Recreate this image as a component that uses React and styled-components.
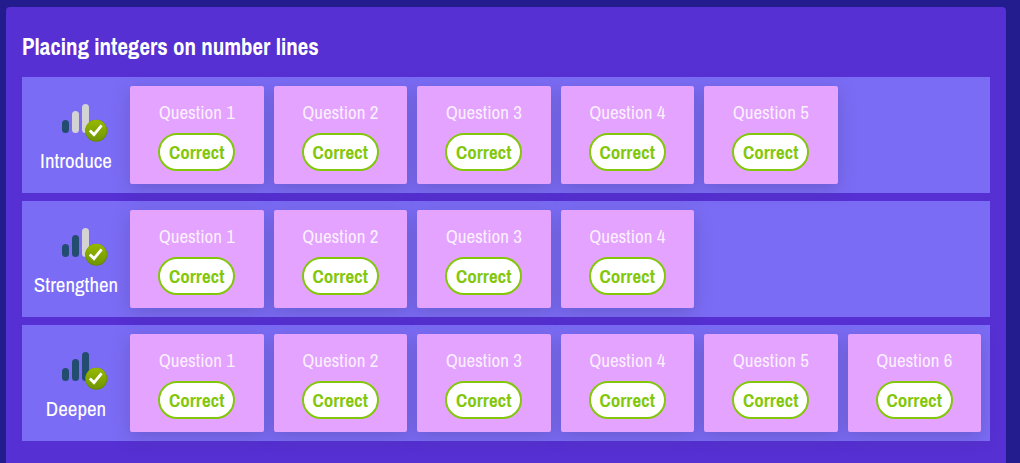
import React from "react";
import styled, { createGlobalStyle } from "styled-components";

const GlobalStyle = createGlobalStyle`
  *, *::before, *::after { box-sizing: border-box; }
  body {
    margin: 0;
    background: #231c8e;
    color: #fff;
    font-family: "Archivo Narrow", "Liberation Sans Narrow", "Arial Narrow", "Liberation Sans", sans-serif;
  }
`;

const Page = styled.main`
  display: flex;
  flex-direction: column;
  min-height: 100vh;
  padding: 7px 14px 0 6px;
`;

const Panel = styled.section`
  flex: 1;
  padding: 24px 16px 22px;
  border-radius: 4px 4px 0 0;
  background: #5630d2;
`;

const Title = styled.h2`
  margin: 0 0 14px;
  font-size: 23px;
  line-height: 32px;
  font-weight: 700;
`;

const Levels = styled.div`
  display: flex;
  flex-direction: column;
  gap: 8px;
`;

const Level = styled.section`
  display: grid;
  grid-template-columns: 108px 1fr;
  padding: 9px 9px 9px 0;
  background: #7b6cf5;
`;

const LevelLabel = styled.div`
  display: flex;
  flex-direction: column;
  align-items: center;
  padding-top: 14px;
`;

const LevelName = styled.h3`
  margin: 5px 0 0;
  font-size: 21px;
  line-height: 28px;
  font-weight: 400;
`;

const Questions = styled.ul`
  display: grid;
  grid-template-columns: repeat(6, 1fr);
  gap: 10px;
  margin: 0;
  padding: 0;
  list-style: none;
  isolation: isolate;
`;

/* The shadow sits on a pseudo-element so that it never darkens a neighbouring card. */
const Question = styled.li`
  position: relative;
  display: flex;
  flex-direction: column;
  align-items: center;
  padding: 14px 0 13px;
  border-radius: 2px;
  background: #e4a3fe;
  font-size: 19px;
  line-height: 24px;

  &::before {
    content: "";
    position: absolute;
    inset: 0;
    z-index: -1;
    border-radius: 2px;
    box-shadow: 0 5px 18px rgba(60, 50, 110, 0.27);
  }
`;

const QuestionName = styled.span`
  color: rgba(255, 255, 255, 0.85);
`;

const Result = styled.span`
  margin-top: 9px;
  padding: 5px 9px;
  border: 2px solid #83c70b;
  border-radius: 19px;
  background: #fff;
  color: #83c70b;
  font-weight: 700;
`;

const Icon = styled.svg`
  display: block;
`;

function LevelIcon({ filled }) {
  const color = (n) => (n <= filled ? "#234d6e" : "#d3d3d3");
  return (
    <Icon width="64" height="42" viewBox="-16 0 64 42" aria-hidden="true">
      <defs>
        <linearGradient id={`badge-${filled}`} x1="0" y1="0" x2="0" y2="1">
          <stop offset="0" stopColor="#97b800" />
          <stop offset="1" stopColor="#709600" />
        </linearGradient>
      </defs>
      <rect x="2" y="20" width="7" height="13" rx="3.5" fill={color(1)} />
      <rect x="12" y="11" width="7" height="22" rx="3.5" fill={color(2)} />
      <rect x="22" y="4" width="7" height="29" rx="3.5" fill={color(3)} />
      <circle cx="36.2" cy="30.8" r="11" fill="#668900" />
      <circle cx="36.2" cy="30.3" r="10.6" fill={`url(#badge-${filled})`} />
      <path d="M29.8 30.4 L34 34.6 L41.6 25.4" fill="none" stroke="#fff" strokeWidth="2.8" />
    </Icon>
  );
}

const levels = [
  { name: "Introduce", filled: 1, questions: 5 },
  { name: "Strengthen", filled: 2, questions: 4 },
  { name: "Deepen", filled: 3, questions: 6 },
];

export default function App() {
  return (
    <>
      <GlobalStyle />
      <Page>
        <Panel>
          <Title>Placing integers on number lines</Title>
          <Levels>
            {levels.map(({ name, filled, questions }) => (
              <Level key={name}>
                <LevelLabel>
                  <LevelIcon filled={filled} />
                  <LevelName>{name}</LevelName>
                </LevelLabel>
                <Questions>
                  {Array.from({ length: questions }, (_, i) => (
                    <Question key={i}>
                      <QuestionName>Question {i + 1}</QuestionName>
                      <Result>Correct</Result>
                    </Question>
                  ))}
                </Questions>
              </Level>
            ))}
          </Levels>
        </Panel>
      </Page>
    </>
  );
}
